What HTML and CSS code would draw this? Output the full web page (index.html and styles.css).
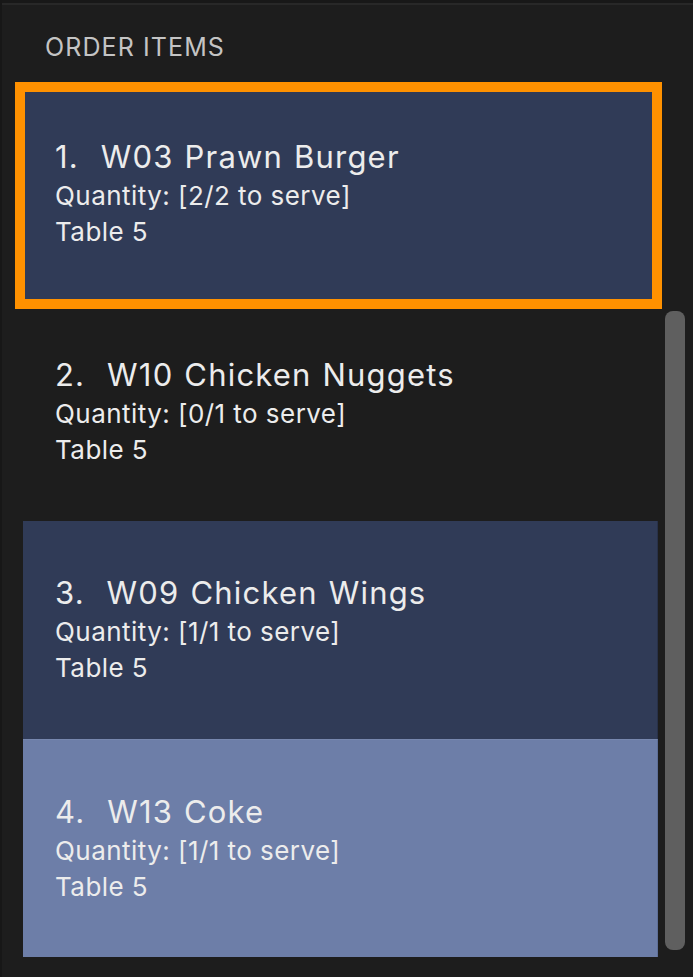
FILE: index.html
```html
<!DOCTYPE html>
<html lang="en">
<head>
<meta charset="utf-8">
<title>Order Items</title>
<link rel="stylesheet" href="styles.css">
</head>
<body>
<div class="topbar"></div>
<div class="panel">
  <div class="header">ORDER ITEMS</div>
  <div class="content">
    <ul class="list">
      <li class="cell cell-navy selected">
        <div class="title">1.&nbsp;&nbsp;W03 Prawn Burger</div>
        <div class="line">Quantity: [2/2 to serve]</div>
        <div class="line">Table 5</div>
      </li>
      <li class="cell">
        <div class="title">2.&nbsp;&nbsp;W10 Chicken Nuggets</div>
        <div class="line">Quantity: [0/1 to serve]</div>
        <div class="line">Table 5</div>
      </li>
      <li class="cell cell-navy">
        <div class="title">3.&nbsp;&nbsp;W09 Chicken Wings</div>
        <div class="line">Quantity: [1/1 to serve]</div>
        <div class="line">Table 5</div>
      </li>
      <li class="cell cell-light">
        <div class="title">4.&nbsp;&nbsp;W13 Coke</div>
        <div class="line">Quantity: [1/1 to serve]</div>
        <div class="line">Table 5</div>
      </li>
    </ul>
    <div class="scrollbar"><div class="thumb"></div></div>
  </div>
</div>
</body>
</html>
```

FILE: styles.css
```css
html, body {
  margin: 0;
  padding: 0;
  background: #1d1d1d;
  height: 100%;
}
body {
  font-family: Inter, "Liberation Sans", sans-serif;
  color: #ececec;
  border-left: 2px solid #171717;
  box-sizing: border-box;
}
.topbar {
  height: 3px;
  background: #181818;
  border-bottom: 2px solid #282828;
}
.panel {
  padding-top: 27px;
}
.header {
  font-size: 25px;
  line-height: 30px;
  letter-spacing: 1.1px;
  color: #c4c4c4;
  padding-left: 43px;
  height: 30px;
  margin-bottom: 23px;
}
.content {
  display: flex;
  align-items: flex-start;
}
.list {
  list-style: none;
  margin: 0 0 0 21px;
  padding: 0;
  width: 635px;
}
.cell {
  position: relative;
  height: 218px;
  box-sizing: border-box;
  padding: 50px 0 0 32px;
}
.cell-navy {
  background: #303b57;
  border-right: 1px solid #283149;
}
.cell-light {
  background: #6d7ea8;
  border-top: 1px solid #7787ae;
  border-right: 1px solid #5e6f98;
}
.selected::after {
  content: "";
  position: absolute;
  left: -8px;
  right: -5px;
  top: -3px;
  bottom: -6px;
  border: 10px solid #ff9100;
  z-index: 2;
}
.title {
  font-size: 31px;
  line-height: 43px;
  letter-spacing: 1.2px;
  word-spacing: 1px;
}
.line {
  font-size: 26px;
  line-height: 36px;
  letter-spacing: 0.45px;
}
.scrollbar {
  margin-left: 7px;
  width: 20px;
  padding-top: 226px;
}
.thumb {
  height: 639px;
  border-radius: 8px;
  background: #5f5f5f;
}
```
